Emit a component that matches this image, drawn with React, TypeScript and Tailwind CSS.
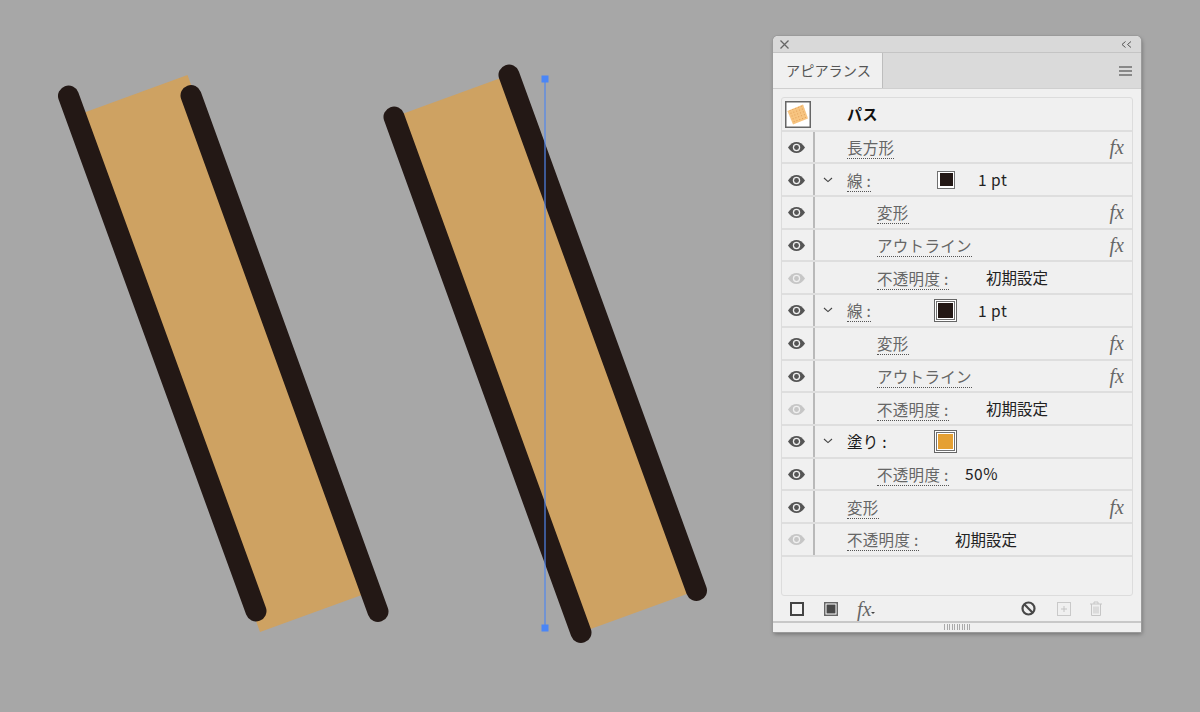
import type { ReactNode } from 'react'

type RowProps = {
  label: string
  faded?: boolean
  chevron?: boolean
  indent?: boolean
  dark?: boolean
  fx?: boolean
  labelWidth?: string
  swatch?: ReactNode
  value?: string
  valueClass?: string
}

function Eye({ faded }: { faded?: boolean }) {
  const c = faded ? '#c6c6c6' : '#555555'
  return (
    <svg width="17" height="11" viewBox="0 0 17 11">
      <path d="M0 5.5C2.6 1.8 5.4 0 8.5 0S14.4 1.8 17 5.5C14.4 9.2 11.6 11 8.5 11S2.6 9.2 0 5.5Z" fill={c} />
      <circle cx="8.5" cy="5.5" r="3.7" fill="#efefef" />
      <circle cx="8.5" cy="5.5" r="2.4" fill={c} />
    </svg>
  )
}

function Chevron() {
  return (
    <svg width="10" height="6" viewBox="0 0 10 6" className="ml-[8px]">
      <path d="M1 1l4 3.6L9 1" fill="none" stroke="#444" strokeWidth="1.1" />
    </svg>
  )
}

function Swatch({ color }: { color: string }) {
  return (
    <div className="box-border size-[18px] border-[1.5px] border-[#707070] bg-white p-[1.5px]">
      <div className="size-full" style={{ background: color }} />
    </div>
  )
}

function DoubleSwatch({ color }: { color: string }) {
  return (
    <div className="box-border size-[23px] border border-[#666] bg-white p-[1px]">
      <div className="box-border size-full border-[1.5px] border-[#707070] bg-white p-[1px]">
        <div className="size-full" style={{ background: color }} />
      </div>
    </div>
  )
}

function Fx() {
  return (
    <span className="ml-auto mr-[8px] font-['Liberation_Serif',serif] text-[20px] italic leading-none text-[#666]">
      fx
    </span>
  )
}

function Row({ label, faded, chevron, indent, dark, fx, labelWidth, swatch, value, valueClass }: RowProps) {
  return (
    <div className="box-border flex h-[32.7px] items-center border-b-2 border-[#dedede]">
      <div className="flex w-[31px] shrink-0 pl-[6px] pt-[1px]">
        <Eye faded={faded} />
      </div>
      <div className="h-full w-[2px] shrink-0 bg-[#b9b9b9]" />
      <div className={indent ? 'flex w-[62px] shrink-0' : 'flex w-[32px] shrink-0'}>{chevron && <Chevron />}</div>
      <div className={labelWidth ?? ''}>
        <span
          className={
            dark
              ? 'text-[15.5px] leading-[18px] tracking-[0.3px] text-[#1a1a1a]'
              : 'border-b border-dotted border-[#555] text-[15.5px] leading-[18px] tracking-[0.3px] text-[#666]'
          }
        >
          {label}
        </span>
      </div>
      {swatch}
      {value && <span className={valueClass}>{value}</span>}
      {fx && <Fx />}
    </div>
  )
}

function Artwork() {
  const ink = '#231815'
  return (
    <svg width="772" height="712" viewBox="0 0 772 712" className="shrink-0">
      <polygon points="72,117 187.5,75 375.5,590 260,632" fill="#cea262" />
      <line x1="68.5" y1="96" x2="256" y2="611" stroke={ink} strokeWidth="21" strokeLinecap="round" />
      <line x1="191" y1="95.5" x2="378" y2="611.5" stroke={ink} strokeWidth="21" strokeLinecap="round" />
      <polygon points="394,117 509,75 696.5,590.5 581,632.5" fill="#cea262" />
      <line x1="394" y1="117" x2="581" y2="632.5" stroke={ink} strokeWidth="21" strokeLinecap="round" />
      <line x1="509" y1="75" x2="696.5" y2="590.5" stroke={ink} strokeWidth="21" strokeLinecap="round" />
      <line x1="545" y1="79" x2="545" y2="628" stroke="#4f86ee" strokeWidth="1.2" />
      <rect x="541.5" y="75.5" width="7" height="7" fill="#4a86f7" />
      <rect x="541.5" y="624.5" width="7" height="7" fill="#4a86f7" />
    </svg>
  )
}

function Thumbnail() {
  return (
    <svg width="26" height="27" viewBox="0 0 26 27" className="ml-[3px]">
      <defs>
        <pattern id="dots" width="3" height="3" patternUnits="userSpaceOnUse" patternTransform="rotate(-20)">
          <circle cx="1.5" cy="1.5" r="0.5" fill="#d9924a" />
        </pattern>
      </defs>
      <rect x="0.75" y="0.75" width="24.5" height="25.5" fill="#fff" stroke="#666" strokeWidth="1.5" />
      <polygon points="2.5,10 18,3.5 23,17.5 8,23.5" fill="#f7c480" />
      <polygon points="2.5,10 18,3.5 23,17.5 8,23.5" fill="url(#dots)" />
    </svg>
  )
}

function Toolbar() {
  return (
    <div className="flex h-[25px] items-center pl-[17px]">
      <svg width="14" height="14" viewBox="0 0 14 14">
        <rect x="1" y="1" width="12" height="12" fill="#f4f4f4" stroke="#444" strokeWidth="2" />
      </svg>
      <svg width="14" height="14" viewBox="0 0 14 14" className="ml-[20px]">
        <rect x="0.75" y="0.75" width="12.5" height="12.5" fill="#fff" stroke="#666" strokeWidth="1.5" />
        <rect x="2.5" y="2.5" width="9" height="9" fill="#484848" />
      </svg>
      <div className="ml-[19px] flex w-[20px] items-start">
        <span className="font-['Liberation_Serif',serif] text-[20px] italic leading-none text-[#666]">fx</span>
        <span className="mt-[13px] size-0 border-x-[2px] border-t-[2px] border-x-transparent border-t-[#444]" />
      </div>
      <svg width="15" height="15" viewBox="0 0 15 15" className="ml-[144px]">
        <circle cx="7.5" cy="7.5" r="6" fill="none" stroke="#484848" strokeWidth="2.2" />
        <line x1="3.3" y1="3.3" x2="11.7" y2="11.7" stroke="#484848" strokeWidth="2.2" />
      </svg>
      <svg width="14" height="14" viewBox="0 0 14 14" className="ml-[21px]">
        <rect x="0.5" y="0.5" width="13" height="13" fill="none" stroke="#c9c9c9" />
        <path d="M7 4v6M4 7h6" stroke="#c4c4c4" />
      </svg>
      <svg width="14" height="15" viewBox="0 0 14 15" className="ml-[18px]">
        <path
          d="M1 3h12M5 3V1h4v2M2.5 3v11.5h9V3M5 5.5v7M7 5.5v7M9 5.5v7"
          fill="none"
          stroke="#c6c6c6"
        />
      </svg>
    </div>
  )
}

function Panel() {
  return (
    <div className="ml-[1px] mt-[36px] box-border flex h-[596px] w-[368px] shrink-0 flex-col overflow-hidden rounded-t-[5px] bg-[#f0f0f0] shadow-[0_0_0_1px_#9a9a9a,1px_2px_4px_rgba(0,0,0,0.35)]">
      <div className="box-border flex h-[17px] shrink-0 items-center justify-between border-b border-[#c4c4c4] bg-[#d9d9d9] pl-[7px] pr-[9px]">
        <svg width="9" height="9" viewBox="0 0 9 9">
          <path d="M0.5 0.5l8 8M8.5 0.5l-8 8" stroke="#666" strokeWidth="1.3" />
        </svg>
        <svg width="11" height="7" viewBox="0 0 11 7">
          <path d="M4.5 0.5L1 3.5l3.5 3M10 0.5L6.5 3.5l3.5 3" fill="none" stroke="#555" />
        </svg>
      </div>
      <div className="box-border flex h-[35px] shrink-0 items-stretch justify-between bg-[#dadada] pr-[9px]">
        <div className="box-border flex w-[110px] items-center border-r border-[#bdbdbd] bg-[#f0f0f0] pl-[13px] text-[14.2px] text-[#555]">
          アピアランス
        </div>
        <div className="flex flex-col justify-center gap-[2px]">
          <div className="h-[2px] w-[13px] bg-[#888]" />
          <div className="h-[2px] w-[13px] bg-[#888]" />
          <div className="h-[2px] w-[13px] bg-[#888]" />
        </div>
      </div>
      <div className="h-px shrink-0 bg-[#cfcfcf]" />
      <div className="mx-[8px] mt-[8px] box-border h-[499px] shrink-0 rounded-[3px] border border-[#dcdcdc] pt-[1px]">
        <div className="box-border flex h-[32.7px] items-center border-b-2 border-[#dedede]">
          <Thumbnail />
          <span className="ml-[36px] text-[15px] font-bold tracking-[0.5px] text-[#111]">パス</span>
        </div>
        <Row label="長方形" fx />
        <Row
          label="線 :"
          chevron
          labelWidth="w-[90px]"
          swatch={<Swatch color="#231815" />}
          value="1 pt"
          valueClass="ml-[23px] text-[15.5px] tracking-[0.5px] text-[#222]"
        />
        <Row label="変形" indent fx />
        <Row label="アウトライン" indent fx />
        <Row label="不透明度 :" indent faded labelWidth="w-[109px]" value="初期設定" valueClass="text-[15.5px] text-[#222]" />
        <Row
          label="線 :"
          chevron
          labelWidth="w-[87px]"
          swatch={<DoubleSwatch color="#231815" />}
          value="1 pt"
          valueClass="ml-[21px] text-[15.5px] tracking-[0.5px] text-[#222]"
        />
        <Row label="変形" indent fx />
        <Row label="アウトライン" indent fx />
        <Row label="不透明度 :" indent faded labelWidth="w-[109px]" value="初期設定" valueClass="text-[15.5px] text-[#222]" />
        <Row label="塗り :" chevron dark labelWidth="w-[87px]" swatch={<DoubleSwatch color="#e5a033" />} />
        <Row label="不透明度 :" indent labelWidth="w-[88px]" value="50%" valueClass="text-[15.5px] tracking-[0.5px] text-[#222]" />
        <Row label="変形" fx />
        <Row label="不透明度 :" faded labelWidth="w-[108px]" value="初期設定" valueClass="text-[15.5px] text-[#222]" />
      </div>
      <Toolbar />
      <div className="box-border flex h-[11px] shrink-0 justify-center border-t-2 border-[#c8c8c8] pt-[1px]">
        <div className="h-[6px] w-[26px] bg-[repeating-linear-gradient(90deg,#aaa_0,#aaa_1px,transparent_1px,transparent_2.5px)]" />
      </div>
    </div>
  )
}

export default function App() {
  return (
    <div className="flex h-[712px] w-[1200px] overflow-hidden bg-[#a7a7a7] font-['Noto_Sans_CJK_JP','Noto_Sans',sans-serif]">
      <Artwork />
      <Panel />
    </div>
  )
}
